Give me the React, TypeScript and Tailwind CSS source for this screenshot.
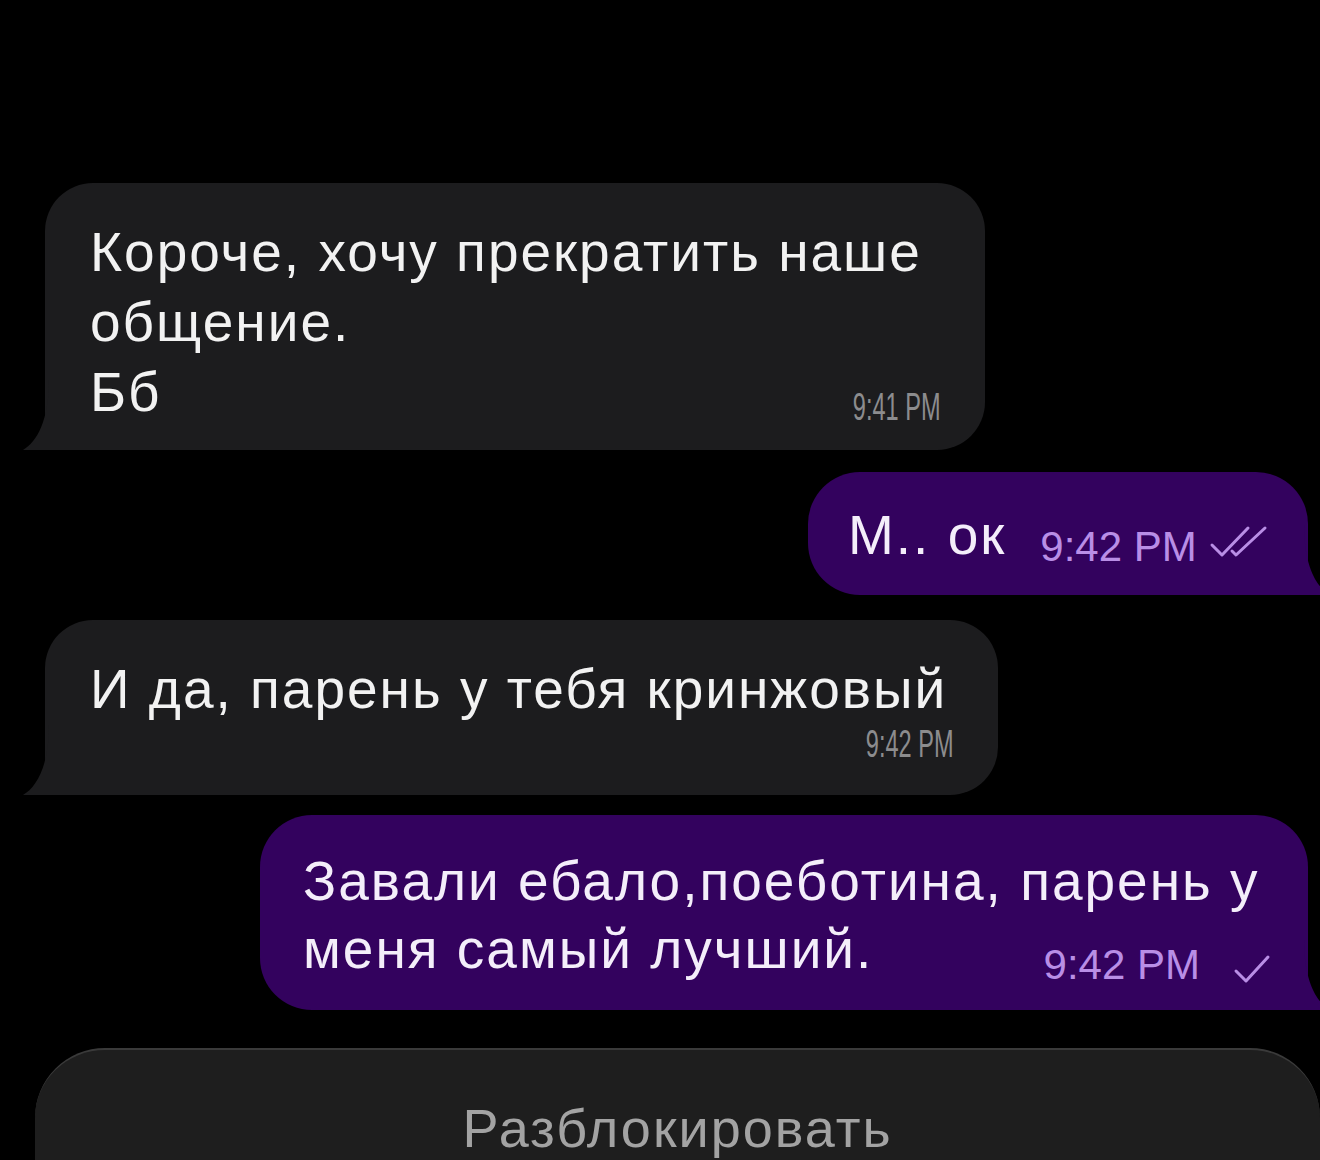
import React from "react";

const FONT = { fontFamily: "'Liberation Sans', Arial, sans-serif" };

function TailLeft({ color }: { color: string }) {
  return (
    <svg className="absolute bottom-0 left-[-22px]" width="26" height="70" viewBox="0 0 26 70">
      <path d="M26 0 C26 40 14 62 0 70 L26 70 Z" fill={color} />
    </svg>
  );
}

function TailRight({ color }: { color: string }) {
  return (
    <svg className="absolute bottom-0 right-[-22px]" width="26" height="70" viewBox="0 0 26 70">
      <path d="M0 0 C0 40 12 62 26 70 L0 70 Z" fill={color} />
    </svg>
  );
}

function Check() {
  return (
    <svg width="40" height="32" viewBox="0 0 40 32" fill="none" stroke="#b98ee6" strokeWidth="3" strokeLinecap="round" strokeLinejoin="round">
      <path d="M4 18 L14 28 L36 4" />
    </svg>
  );
}

function DoubleCheck() {
  return (
    <svg width="62" height="38" viewBox="0 0 62 38" fill="none" stroke="#b98ee6" strokeWidth="3" strokeLinecap="round" strokeLinejoin="round">
      <path d="M3 21 L13 31 L39 4" />
      <path d="M23 27 L27 31 L56 4" />
    </svg>
  );
}

export default function App() {
  const gray = "#1c1c1e";
  const purple = "#33025e";
  return (
    <div className="w-[1320px] h-[1160px] bg-black overflow-hidden flex flex-col text-white" style={FONT}>
      {/* incoming: message 1 */}
      <div className="relative shrink-0 mt-[183px] ml-[45px] w-[940px] h-[267px] rounded-[48px] rounded-bl-none bg-[#1c1c1e] pl-[45px] pr-[44px] pt-[34px]">
        <TailLeft color={gray} />
        <div className="text-[55px] leading-[70px] tracking-[2px] text-[#f2f2f2] whitespace-nowrap">
          Короче, хочу прекратить наше
          <br />
          общение.
        </div>
        <div className="flex items-end justify-between">
          <span className="text-[55px] leading-[70px] tracking-[2px] text-[#f2f2f2]">Бб</span>
          <span className="inline-block origin-right scale-x-[0.62] text-[38px] leading-[40px] text-[#8c8c8e] whitespace-nowrap mb-[0px]">
            9:41 PM
          </span>
        </div>
      </div>

      {/* outgoing: М.. ок */}
      <div className="relative shrink-0 mt-[22px] self-end mr-[12px] w-[500px] h-[123px] rounded-[52px] rounded-br-none bg-[#33025e] pl-[40px] flex items-center">
        <TailRight color={purple} />
        <span className="text-[55px] leading-[60px] tracking-[2px] text-[#f4eefa] mt-[2px]">М.. ок</span>
        <span className="ml-[34px] mt-[26px] text-[42px] leading-[44px] text-[#b98ee6] whitespace-nowrap">9:42 PM</span>
        <span className="ml-[12px] mt-[18px]">
          <DoubleCheck />
        </span>
      </div>

      {/* incoming: message 2 */}
      <div className="relative shrink-0 mt-[25px] ml-[45px] w-[953px] h-[175px] rounded-[48px] rounded-bl-none bg-[#1c1c1e] pl-[45px] pr-[44px] pt-[34px]">
        <TailLeft color={gray} />
        <div className="text-[55px] leading-[70px] tracking-[2px] text-[#f2f2f2] whitespace-nowrap">
          И да, парень у тебя кринжовый
        </div>
        <div className="flex justify-end">
          <span className="inline-block origin-right scale-x-[0.62] text-[38px] leading-[40px] text-[#8c8c8e] whitespace-nowrap">
            9:42 PM
          </span>
        </div>
      </div>

      {/* outgoing: long reply */}
      <div className="relative shrink-0 mt-[20px] self-end mr-[12px] w-[1048px] h-[195px] rounded-[52px] rounded-br-none bg-[#33025e] pl-[43px] pr-[36px] pt-[32px]">
        <TailRight color={purple} />
        <div className="text-[55px] leading-[68px] tracking-[2px] text-[#f4eefa] whitespace-nowrap">
          Завали ебало,поеботина, парень у
        </div>
        <div className="flex items-end">
          <span className="text-[55px] leading-[68px] tracking-[2px] text-[#f4eefa] whitespace-nowrap">меня самый лучший.</span>
          <span className="ml-auto mb-[-4px] text-[42px] leading-[44px] text-[#b98ee6] whitespace-nowrap">9:42 PM</span>
          <span className="ml-[32px] mb-[-2px]">
            <Check />
          </span>
        </div>
      </div>

      {/* unblock button */}
      <div className="shrink-0 mt-[38px] ml-[35px] w-[1285px] h-[140px] rounded-t-[70px] bg-[#1e1e1e] border-t-2 border-[#3a3a3a] flex justify-center pt-[48px]">
        <span className="text-[54px] leading-[60px] tracking-[2px] text-[#a3a3a3]">Разблокировать</span>
      </div>
    </div>
  );
}
